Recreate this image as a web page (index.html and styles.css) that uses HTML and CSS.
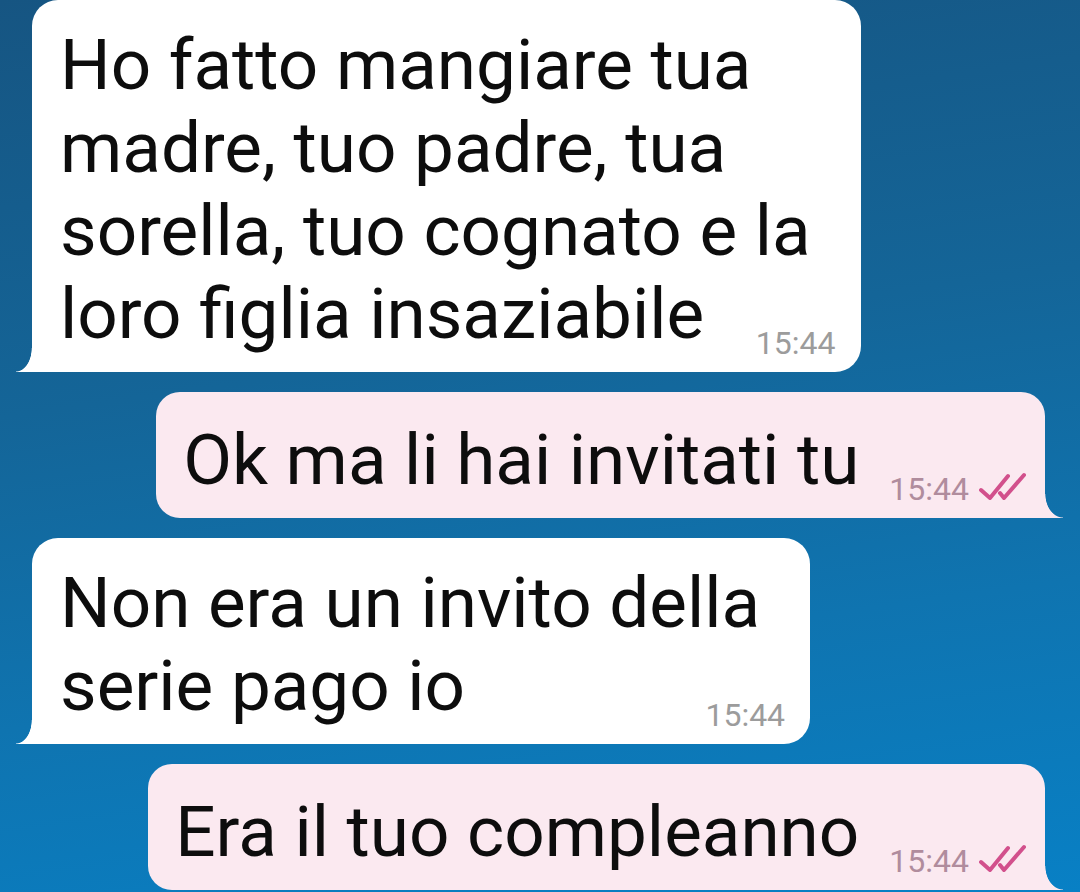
FILE: index.html
```html
<!DOCTYPE html>
<html lang="it">
<head>
<meta charset="utf-8">
<title>Chat</title>
<link rel="stylesheet" href="styles.css">
</head>
<body>
<div class="chat">
  <div class="bubble in">
    <p class="text">Ho fatto mangiare tua<br>madre, tuo padre, tua<br>sorella, tuo cognato e la<br>loro figlia insaziabile</p>
    <span class="meta">15:44</span>
  </div>
  <div class="bubble out">
    <p class="text">Ok ma li hai invitati tu</p>
    <span class="meta">15:44<svg class="ticks" width="48" height="28" viewBox="0 0 48 28"><path d="M3 18 L12 26 L30 4 M22 21 L26 26 L46 3"/></svg></span>
  </div>
  <div class="bubble in">
    <p class="text">Non era un invito della<br>serie pago io</p>
    <span class="meta">15:44</span>
  </div>
  <div class="bubble out">
    <p class="text">Era il tuo compleanno</p>
    <span class="meta">15:44<svg class="ticks" width="48" height="28" viewBox="0 0 48 28"><path d="M3 18 L12 26 L30 4 M22 21 L26 26 L46 3"/></svg></span>
  </div>
</div>
</body>
</html>
```
FILE: styles.css
```css
html, body {
  margin: 0;
  height: 892px;
  overflow: hidden;
}
body {
  background: linear-gradient(172deg, #165582 0%, #146598 40%, #0f74b0 70%, #0880c5 100%);
  font-family: Roboto, "Noto Sans", sans-serif;
}
.chat {
  display: flex;
  flex-direction: column;
  gap: 20px;
  padding: 0 35px 0 32px;
}
.bubble {
  position: relative;
}
.text {
  margin: 0;
  font-size: 71px;
  line-height: 83px;
  color: #0d0d0d;
  white-space: nowrap;
}
.meta {
  font-size: 32px;
  line-height: 36px;
  white-space: nowrap;
}
.bubble.in {
  align-self: flex-start;
  display: grid;
  padding: 23px 50px 11px 28px;
  background: #fff;
  border-radius: 26px 26px 26px 0;
}
.in .meta {
  justify-self: end;
  margin: -30px -25px 0 0;
  color: #9c9c9c;
}
.bubble.in::before {
  content: "";
  position: absolute;
  left: -16px;
  bottom: 0;
  width: 16px;
  height: 24px;
  background: radial-gradient(ellipse 16px 24px at 0 0, transparent 96%, #fff 100%);
}
.bubble.out {
  align-self: flex-end;
  display: flex;
  align-items: flex-end;
  padding: 26px 19px 17px 27px;
  background: #fbe9f0;
  border-radius: 24px 24px 0 24px;
}
.out .meta {
  display: flex;
  align-items: baseline;
  gap: 9px;
  margin: 0 0 -6px 30px;
  color: #b08c9d;
}
.bubble.out::after {
  content: "";
  position: absolute;
  right: -18px;
  bottom: 0;
  width: 18px;
  height: 24px;
  background: radial-gradient(ellipse 18px 24px at 100% 0, transparent 96%, #fbe9f0 100%);
}
.ticks path {
  fill: none;
  stroke: #d2508c;
  stroke-width: 4;
  stroke-linecap: round;
  stroke-linejoin: round;
}
```
